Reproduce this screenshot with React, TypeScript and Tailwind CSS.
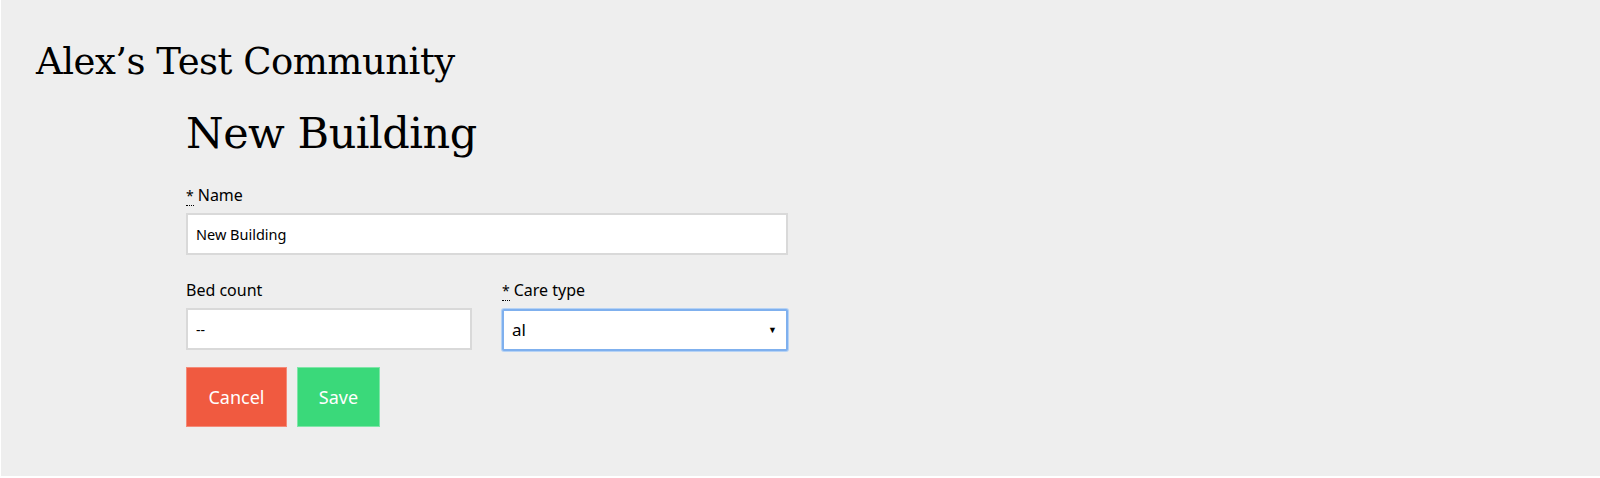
import React, { useState } from 'react';

const serif = { fontFamily: '"DejaVu Serif", serif' };

const Required = () => (
  <abbr title="required" className="no-underline border-b border-dotted border-black mr-1 text-[14px]">
    *
  </abbr>
);

const App = () => {
  const [form, setForm] = useState({ name: 'New Building', bed_count: '', care_type: 'al' });

  const handleChange = (e: React.ChangeEvent<HTMLInputElement | HTMLSelectElement>) => {
    const { name, value } = e.target;
    setForm(prev => ({ ...prev, [name]: value }));
  };

  return (
    <div
      className="min-h-[478px] bg-[#eeeeee] border-l border-b-2 border-white text-black"
      style={{ fontFamily: '"Noto Sans", sans-serif' }}
    >
      <div className="pl-[35px] pt-[39px]">
        <h1 className="text-[37px] leading-[46px] tracking-[-0.5px]" style={serif}>
          Alex’s Test Community
        </h1>
      </div>
      <div className="pl-[185px] pt-[20px] w-[787px]">
        <h2 className="text-[43px] leading-[56px] mb-[23px] tracking-[-0.5px]" style={serif}>
          New Building
        </h2>
        <form onSubmit={e => e.preventDefault()}>
          <label className="block text-[16px] leading-[22px] mb-[6px]">
            <Required />
            Name
          </label>
          <input
            type="text"
            name="name"
            className="w-full h-[42px] bg-white border-2 border-[#d9d9d9] px-[8px] text-[14.5px] outline-none"
            value={form.name}
            onChange={handleChange}
          />
          <div className="grid grid-cols-2 gap-[30px] mt-[24px]">
            <div>
              <label className="block text-[16px] leading-[22px] mb-[7px]">Bed count</label>
              <input
                type="text"
                name="bed_count"
                placeholder="--"
                className="w-full h-[42px] bg-white border-2 border-[#d9d9d9] px-[8px] text-[14px] outline-none placeholder:text-black"
                value={form.bed_count}
                onChange={handleChange}
              />
            </div>
            <div>
              <label className="block text-[16px] leading-[22px] mb-[7px]">
                <Required />
                Care type
              </label>
              <div className="relative">
                <select
                  name="care_type"
                  className="w-full h-[42px] bg-white border-2 border-[#7fb0ee] rounded-[2px] shadow-[0_0_0_1px_#b5d2f5] px-[8px] text-[17px] outline-none appearance-none"
                  value={form.care_type}
                  onChange={handleChange}
                >
                  <option value="al">al</option>
                  <option value="il">il</option>
                  <option value="mc">mc</option>
                </select>
                <span className="absolute right-[11px] top-1/2 -translate-y-1/2 text-[9px] pointer-events-none">▼</span>
              </div>
            </div>
          </div>
          <div className="flex gap-[10px] mt-[16px]">
            <button
              type="button"
              className="w-[101px] h-[60px] bg-[#f05a40] border border-[#f48a78] text-white text-[18px]"
            >
              Cancel
            </button>
            <button
              type="submit"
              className="w-[83px] h-[60px] bg-[#3ad97a] border border-[#7fe6a8] text-white text-[18px]"
            >
              Save
            </button>
          </div>
        </form>
      </div>
    </div>
  );
};

export default App;
